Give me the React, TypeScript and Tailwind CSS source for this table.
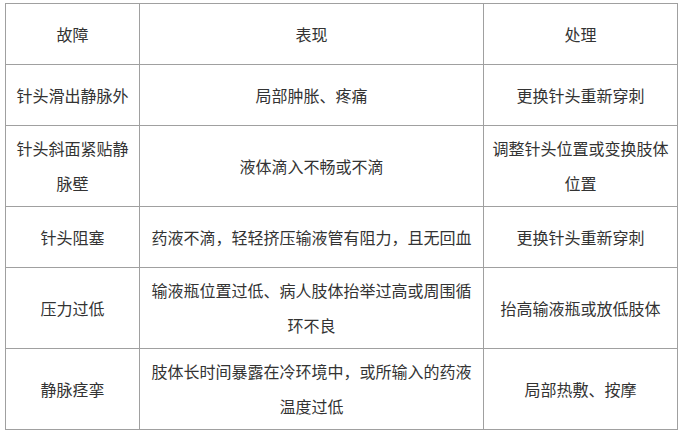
const rows: { h: string; cells: string[] }[] = [
  { h: "h-[61px]", cells: ["故障", "表现", "处理"] },
  { h: "h-[61px]", cells: ["针头滑出静脉外", "局部肿胀、疼痛", "更换针头重新穿刺"] },
  { h: "h-[81px]", cells: ["针头斜面紧贴静脉壁", "液体滴入不畅或不滴", "调整针头位置或变换肢体位置"] },
  { h: "h-[61px]", cells: ["针头阻塞", "药液不滴，轻轻挤压输液管有阻力，且无回血", "更换针头重新穿刺"] },
  { h: "h-[81px]", cells: ["压力过低", "输液瓶位置过低、病人肢体抬举过高或周围循环不良", "抬高输液瓶或放低肢体"] },
  { h: "h-[81px]", cells: ["静脉痉挛", "肢体长时间暴露在冷环境中，或所输入的药液温度过低", "局部热敷、按摩"] },
];

export default function App() {
  return (
    <div className="bg-white w-[679px] h-[432px] pl-[5px] pt-[3px] font-['Microsoft_YaHei','Noto_Sans_CJK_SC',sans-serif] text-[#333]">
      <table className="table-fixed border-collapse w-[672px] text-[16px] leading-[35px]">
        <colgroup>
          <col className="w-[134px]" />
          <col className="w-[344px]" />
          <col className="w-[194px]" />
        </colgroup>
        <tbody>
          {rows.map((r, i) => (
            <tr key={i} className={r.h}>
              {r.cells.map((c, j) => (
                <td key={j} className="border border-[#a0a0a0] px-2 py-0 text-center align-middle">
                  {c}
                </td>
              ))}
            </tr>
          ))}
        </tbody>
      </table>
    </div>
  );
}
